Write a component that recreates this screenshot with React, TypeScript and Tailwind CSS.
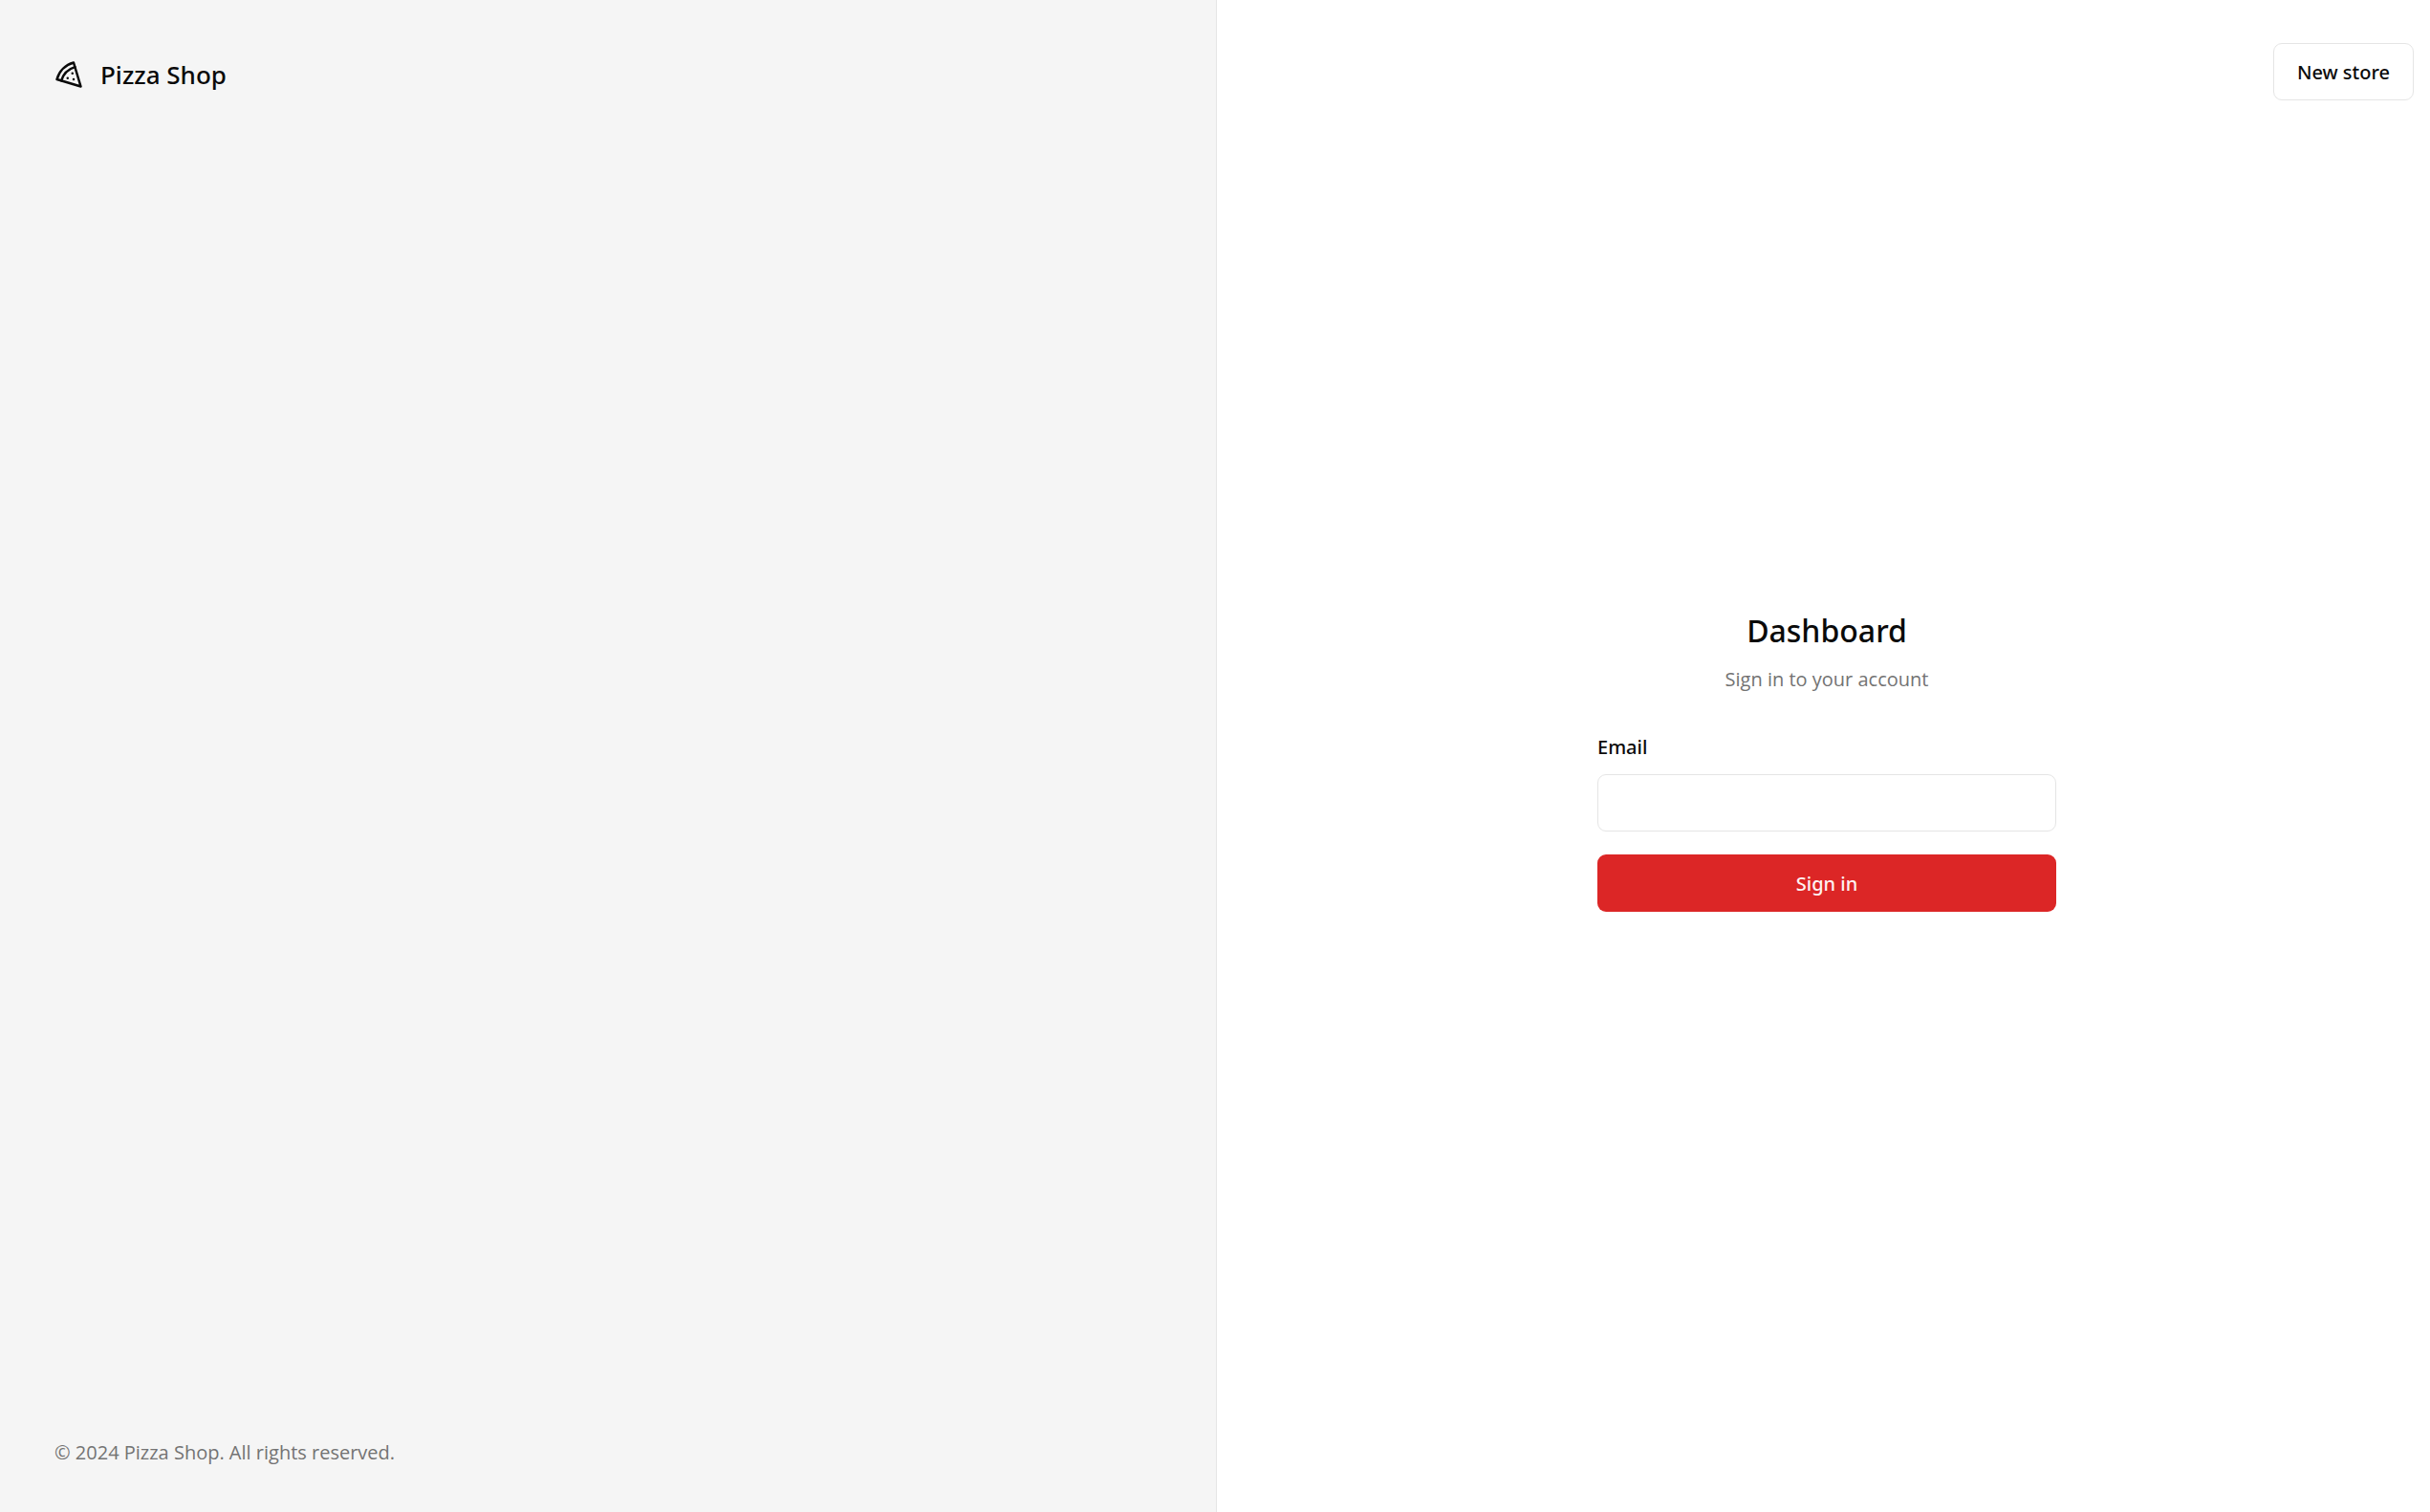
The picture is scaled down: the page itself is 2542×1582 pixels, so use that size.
function PizzaIcon() {
  return (
    <svg
      aria-hidden="true"
      viewBox="0 0 24 24"
      fill="none"
      stroke="currentColor"
      strokeWidth="2"
      strokeLinecap="round"
      strokeLinejoin="round"
      className="size-[30px]"
    >
      <path d="M15 11h.01" />
      <path d="M11 15h.01" />
      <path d="M16 16h.01" />
      <path d="m2 16 20 6-6-20A20 20 0 0 0 2 16" />
      <path d="M5.71 17.11a17.04 17.04 0 0 1 11.4-11.4" />
    </svg>
  )
}

export default function App() {
  return (
    <div className="grid min-h-screen grid-cols-[1273fr_1269fr] bg-white font-['Noto_Sans',sans-serif] text-[#0a0a0a]">
      <div className="flex flex-col justify-between border-r border-[#e5e5e5] bg-[#f5f5f5] px-[57px] pb-12 pt-14">
        <div className="flex items-center gap-[18px] text-[26px] font-medium leading-[44px]">
          <PizzaIcon />
          <span>Pizza Shop</span>
        </div>
        <footer className="font-['Open_Sans',sans-serif] text-xl text-[#737373]">
          © 2024 Pizza Shop. All rights reserved.
        </footer>
      </div>
      <main className="relative flex flex-col items-center justify-center pl-[7px] pt-2">
        <a
          href="#new-store"
          className="absolute right-[17px] top-[45px] flex h-[60px] items-center rounded-[9px] border border-[#e5e5e5] px-6 pt-0.5 text-xl font-medium"
        >
          New store
        </a>
        <div className="flex w-[480px] flex-col gap-10">
          <div className="flex flex-col gap-3 text-center">
            <h1 className="text-[32px] font-medium leading-[48px]">Dashboard</h1>
            <p className="font-['Open_Sans',sans-serif] text-xl leading-[30px] text-[#737373]">
              Sign in to your account
            </p>
          </div>
          <form className="flex flex-col gap-6">
            <div className="flex flex-col gap-3">
              <label htmlFor="email" className="text-xl font-medium leading-8">
                Email
              </label>
              <input
                id="email"
                type="email"
                className="h-[60px] rounded-[9px] border border-[#e5e5e5] px-5 text-xl"
              />
            </div>
            <button
              type="button"
              className="h-[60px] rounded-[9px] bg-[#dc2626] pt-0.5 text-xl font-medium text-[#fef2f2]"
            >
              Sign in
            </button>
          </form>
        </div>
      </main>
    </div>
  )
}
